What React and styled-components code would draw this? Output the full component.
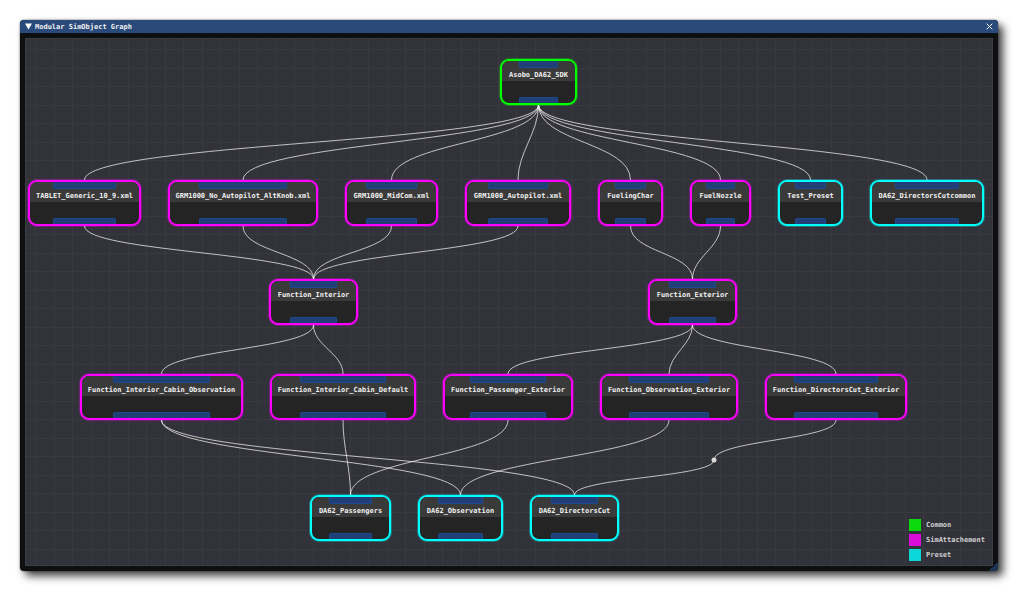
import React from 'react';
import styled, { createGlobalStyle } from 'styled-components';

const colors = {
  common: '#00ff00',
  sim: '#ff00ff',
  preset: '#00ffff',
};

const NODE_HEIGHT = 46;

// x / y are the top left corner of the node on the canvas
const nodes = [
  { id: 'sdk', label: 'Asobo_DA62_SDK', kind: 'common', x: 475, y: 21, w: 77 },

  { id: 'tablet', label: 'TABLET_Generic_10_9.xml', kind: 'sim', x: 3, y: 142, w: 113 },
  { id: 'altKnob', label: 'GRM1000_No_Autopilot_AltKnob.xml', kind: 'sim', x: 143, y: 142, w: 150 },
  { id: 'midCom', label: 'GRM1000_MidCom.xml', kind: 'sim', x: 320, y: 142, w: 93 },
  { id: 'autopilot', label: 'GRM1000_Autopilot.xml', kind: 'sim', x: 440, y: 142, w: 106 },
  { id: 'fuelingChar', label: 'FuelingChar', kind: 'sim', x: 573, y: 142, w: 65 },
  { id: 'fuelNozzle', label: 'FuelNozzle', kind: 'sim', x: 665, y: 142, w: 61 },
  { id: 'test', label: 'Test_Preset', kind: 'preset', x: 753, y: 142, w: 65 },
  { id: 'cutCommon', label: 'DA62_DirectorsCutcommon', kind: 'preset', x: 845, y: 142, w: 114 },

  { id: 'interior', label: 'Function_Interior', kind: 'sim', x: 244, y: 241, w: 89 },
  { id: 'exterior', label: 'Function_Exterior', kind: 'sim', x: 623, y: 241, w: 89 },

  { id: 'cabinObs', label: 'Function_Interior_Cabin_Observation', kind: 'sim', x: 55, y: 336, w: 163 },
  { id: 'cabinDef', label: 'Function_Interior_Cabin_Default', kind: 'sim', x: 245, y: 336, w: 146 },
  { id: 'passExt', label: 'Function_Passenger_Exterior', kind: 'sim', x: 418, y: 336, w: 130 },
  { id: 'obsExt', label: 'Function_Observation_Exterior', kind: 'sim', x: 575, y: 336, w: 138 },
  { id: 'cutExt', label: 'Function_DirectorsCut_Exterior', kind: 'sim', x: 740, y: 336, w: 142 },

  { id: 'passengers', label: 'DA62_Passengers', kind: 'preset', x: 285, y: 457, w: 81 },
  { id: 'observation', label: 'DA62_Observation', kind: 'preset', x: 393, y: 457, w: 85 },
  { id: 'directorsCut', label: 'DA62_DirectorsCut', kind: 'preset', x: 505, y: 457, w: 89 },
];

const links = [
  ['sdk', 'tablet'],
  ['sdk', 'altKnob'],
  ['sdk', 'midCom'],
  ['sdk', 'autopilot'],
  ['sdk', 'fuelingChar'],
  ['sdk', 'fuelNozzle'],
  ['sdk', 'test'],
  ['sdk', 'cutCommon'],
  ['tablet', 'interior'],
  ['altKnob', 'interior'],
  ['midCom', 'interior'],
  ['autopilot', 'interior'],
  ['fuelingChar', 'exterior'],
  ['fuelNozzle', 'exterior'],
  ['interior', 'cabinObs'],
  ['interior', 'cabinDef'],
  ['exterior', 'passExt'],
  ['exterior', 'obsExt'],
  ['exterior', 'cutExt'],
  ['cabinObs', 'observation'],
  ['cabinObs', 'directorsCut'],
  ['cabinDef', 'passengers'],
  ['passExt', 'passengers'],
  ['obsExt', 'observation'],
];

const reroute = { x: 689, y: 422 };

const legend = [
  { label: 'Common', color: '#0bd90b' },
  { label: 'SimAttachement', color: '#d90bd9' },
  { label: 'Preset', color: '#0bd9d9' },
];

const find = (id) => nodes.find((n) => n.id === id);
const outPin = (n) => ({ x: n.x + n.w / 2, y: n.y + NODE_HEIGHT });
const inPin = (n) => ({ x: n.x + n.w / 2, y: n.y });

// short links get a weaker pull so they don't bend too hard
function curve(a, b) {
  const dist = Math.hypot(b.x - a.x, b.y - a.y);
  const d = Math.min((b.y - a.y) / 2, dist * 0.36);
  return `M${a.x} ${a.y} C${a.x} ${a.y + d} ${b.x} ${b.y - d} ${b.x} ${b.y}`;
}

function Node({ node }) {
  return (
    <NodeBox $color={colors[node.kind]} style={{ left: node.x, top: node.y, width: node.w }}>
      <NodeHeader>
        <Pin $side="top" />
        <NodeTitle>{node.label}</NodeTitle>
      </NodeHeader>
      <NodeBody>
        <Pin $side="bottom" />
      </NodeBody>
    </NodeBox>
  );
}

function Links() {
  return (
    <LinkLayer aria-hidden="true">
      {links.map(([from, to]) => (
        <path key={from + to} d={curve(outPin(find(from)), inPin(find(to)))} />
      ))}
      <path d={curve(outPin(find('cutExt')), reroute)} />
      <path d={curve(reroute, inPin(find('directorsCut')))} />
      <circle cx={reroute.x} cy={reroute.y} r="2.5" />
    </LinkLayer>
  );
}

export default function App() {
  return (
    <>
      <GlobalStyle />
      <Page>
        <Window>
          <TitleBar>
            <IconButton type="button" aria-label="Collapse">
              <svg width="7" height="7" viewBox="0 0 7 7">
                <path d="M0 0.5H7L3.5 6.5Z" fill="#fff" />
              </svg>
            </IconButton>
            <Title>Modular SimObject Graph</Title>
            <IconButton type="button" aria-label="Close">
              <svg width="7" height="7" viewBox="0 0 7 7">
                <path d="M0.7 0.7L6.3 6.3M6.3 0.7L0.7 6.3" stroke="#fff" strokeWidth="1" />
              </svg>
            </IconButton>
          </TitleBar>
          <Canvas>
            {nodes.map((node) => (
              <Node key={node.id} node={node} />
            ))}
            <Links />
            <Legend>
              {legend.map((item) => (
                <LegendItem key={item.label}>
                  <Swatch $color={item.color} />
                  {item.label}
                </LegendItem>
              ))}
            </Legend>
          </Canvas>
          <Grip />
        </Window>
      </Page>
    </>
  );
}

const GlobalStyle = createGlobalStyle`
  * {
    box-sizing: border-box;
  }
  body {
    margin: 0;
    background: #fff;
    font-family: 'DejaVu Sans Mono', monospace;
    font-size: 7px;
    font-weight: 700;
    line-height: 10px;
    color: #f0f0f0;
  }
`;

const Page = styled.div`
  display: flex;
  min-height: 100vh;
  padding: 20px;
`;

const Window = styled.main`
  position: relative;
  display: flex;
  flex-direction: column;
  flex: 1;
  min-width: 0;
  padding: 0 5px 5px;
  background: #0e0f10;
  border-radius: 4px;
  box-shadow: 0 0 2px rgba(0, 0, 0, 0.6), 5px 5px 9px rgba(0, 0, 0, 0.75);
`;

const TitleBar = styled.header`
  display: flex;
  align-items: center;
  gap: 3px;
  height: 13px;
  margin: 0 -5px 5px;
  padding: 0 5px;
  background: #294a7a;
  border-radius: 4px 4px 0 0;
`;

const IconButton = styled.button`
  display: flex;
  padding: 0;
  border: 0;
  background: none;
  cursor: pointer;
`;

const Title = styled.h1`
  flex: 1;
  margin: 0;
  font-size: 7px;
`;

// two cells per tile
const Canvas = styled.div`
  position: relative;
  flex: 1;
  box-shadow: inset 0 0 0 1px #3d3d44;
  background-color: #32323a;
  background-image: linear-gradient(
      90deg,
      transparent 10px,
      #393a3d 10px,
      #393a3d 11px,
      transparent 11px,
      transparent 29px,
      #393a3d 29px,
      #393a3d 30px,
      transparent 30px
    ),
    linear-gradient(
      transparent 11px,
      #393a3d 11px,
      #393a3d 12px,
      transparent 12px,
      transparent 30px,
      #393a3d 30px,
      #393a3d 31px,
      transparent 31px
    );
  background-size: 37px 37px;
  overflow: hidden;
`;

const LinkLayer = styled.svg`
  position: absolute;
  top: 0;
  left: 0;
  width: 100%;
  height: 100%;
  pointer-events: none;

  path {
    fill: none;
    stroke: rgba(255, 255, 255, 0.7);
    stroke-width: 1;
  }

  circle {
    fill: #d8d8d8;
  }
`;

const NodeBox = styled.section`
  position: absolute;
  display: flex;
  flex-direction: column;
  height: ${NODE_HEIGHT}px;
  border: 2px solid ${(props) => props.$color};
  border-radius: 9px;
  background: #242424;
  box-shadow: 0 0 0 1px ${(props) => props.$color}4d;
  overflow: hidden;
`;

const NodeHeader = styled.div`
  display: flex;
  flex-direction: column;
  align-items: center;
  height: 20px;
  background: #3a3a3a;
`;

const NodeTitle = styled.h2`
  margin: 2px 0 0;
  font-size: 7px;
  white-space: nowrap;
`;

const NodeBody = styled.div`
  display: flex;
  flex: 1;
  flex-direction: column;
  align-items: center;
  justify-content: flex-end;
`;

const Pin = styled.span`
  width: calc((100% - 13px) * 2 / 3);
  height: ${(props) => (props.$side === 'top' ? '7px' : '6px')};
  flex-shrink: 0;
  border: 1px solid #1d4a8f;
  border-width: ${(props) => (props.$side === 'top' ? '0 1px 1px' : '1px 1px 0')};
  border-radius: ${(props) => (props.$side === 'top' ? '0 0 2px 2px' : '2px 2px 0 0')};
  background: #1f3f76;
`;

const Legend = styled.ul`
  position: absolute;
  right: 8px;
  bottom: 5px;
  display: flex;
  flex-direction: column;
  gap: 3px;
  margin: 0;
  padding: 0;
  list-style: none;
  color: #d0d0d0;
`;

const LegendItem = styled.li`
  display: flex;
  align-items: center;
  gap: 5px;
`;

const Swatch = styled.span`
  width: 12px;
  height: 12px;
  background: ${(props) => props.$color};
`;

const Grip = styled.span`
  position: absolute;
  right: 0;
  bottom: 0;
  width: 9px;
  height: 9px;
  border-radius: 0 0 4px 0;
  background: linear-gradient(135deg, transparent 50%, #1d3554 50%);
`;
